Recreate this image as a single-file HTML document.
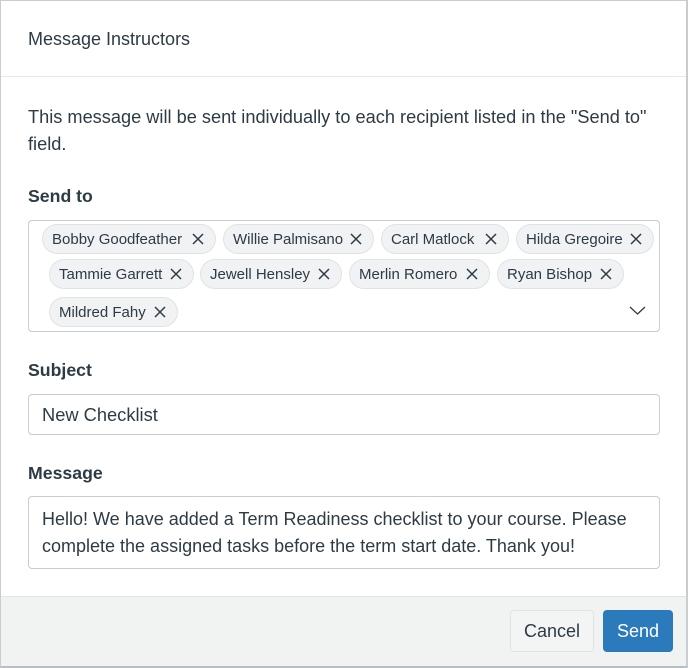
<!DOCTYPE html>
<html><head><style>
*{box-sizing:border-box;margin:0;padding:0}
body{width:688px;height:668px;background:#fff;font-family:"Liberation Sans",Arial,sans-serif;color:#2d3b45;position:relative;overflow:hidden}
.frame{position:absolute;left:0;top:0;width:688px;height:668px;border:1px solid #c7cdd1;border-bottom:2px solid #b8bec2;border-right:2px solid #c7cdd1}
.a{position:absolute}
.chip{position:absolute;height:30px;border:1px solid #dfe3e6;background:#f0f2f3;border-radius:15px;font-size:15px;line-height:29px;padding-left:9px;white-space:nowrap}
.chip svg{position:absolute;right:11px;top:8px}
.lbl{font-weight:bold;font-size:17.7px}
.box{border:1px solid #c7cdd1;border-radius:4px;background:#fff}
</style></head><body>
<div class="a" style="left:1px;top:76px;width:686px;height:1px;background:#e6e9ea"></div>
<div class="a" style="left:28px;top:29px;font-size:18px">Message Instructors</div>
<div class="a" style="left:28px;top:104px;width:660px;font-size:18.2px;line-height:27px">This message will be sent individually to each recipient listed in the "Send to"<br>field.</div>
<div class="a lbl" style="left:28px;top:186px">Send to</div>
<div class="a box" style="left:28px;top:220px;width:632px;height:112px"></div>
<div class="chip" style="left:42px;top:224px;width:174px">Bobby Goodfeather<svg width="12" height="12"><path d="M1 1L11 11M11 1L1 11" stroke="#2d3b45" stroke-width="1.5"/></svg></div>
<div class="chip" style="left:223px;top:224px;width:151px">Willie Palmisano<svg width="12" height="12"><path d="M1 1L11 11M11 1L1 11" stroke="#2d3b45" stroke-width="1.5"/></svg></div>
<div class="chip" style="left:381px;top:224px;width:128px">Carl Matlock<svg width="12" height="12"><path d="M1 1L11 11M11 1L1 11" stroke="#2d3b45" stroke-width="1.5"/></svg></div>
<div class="chip" style="left:516px;top:224px;width:138px">Hilda Gregoire<svg width="12" height="12"><path d="M1 1L11 11M11 1L1 11" stroke="#2d3b45" stroke-width="1.5"/></svg></div>
<div class="chip" style="left:49px;top:259px;width:145px">Tammie Garrett<svg width="12" height="12"><path d="M1 1L11 11M11 1L1 11" stroke="#2d3b45" stroke-width="1.5"/></svg></div>
<div class="chip" style="left:200px;top:259px;width:142px">Jewell Hensley<svg width="12" height="12"><path d="M1 1L11 11M11 1L1 11" stroke="#2d3b45" stroke-width="1.5"/></svg></div>
<div class="chip" style="left:349px;top:259px;width:141px">Merlin Romero<svg width="12" height="12"><path d="M1 1L11 11M11 1L1 11" stroke="#2d3b45" stroke-width="1.5"/></svg></div>
<div class="chip" style="left:497px;top:259px;width:127px">Ryan Bishop<svg width="12" height="12"><path d="M1 1L11 11M11 1L1 11" stroke="#2d3b45" stroke-width="1.5"/></svg></div>
<div class="chip" style="left:49px;top:297px;width:129px">Mildred Fahy<svg width="12" height="12"><path d="M1 1L11 11M11 1L1 11" stroke="#2d3b45" stroke-width="1.5"/></svg></div>
<svg class="a" style="left:629px;top:305px" width="17" height="11"><path d="M1 2 L8.5 9 L16 2" fill="none" stroke="#2d3b45" stroke-width="1.3"/></svg>
<div class="a lbl" style="left:28px;top:360px">Subject</div>
<div class="a box" style="left:28px;top:394px;width:632px;height:41px;font-size:18.3px;line-height:40px;padding-left:13px">New Checklist</div>
<div class="a lbl" style="left:28px;top:463px">Message</div>
<div class="a box" style="left:28px;top:496px;width:632px;height:73px;font-size:18px;line-height:27px;padding:9px 13px">Hello! We have added a Term Readiness checklist to your course. Please complete the assigned tasks before the term start date. Thank you!</div>
<div class="a" style="left:1px;top:596px;width:686px;height:72px;background:#f1f2f2;border-top:1px solid #e2e5e6"></div>
<div class="a" style="left:510px;top:610px;width:84px;height:42px;border:1px solid #e0e3e5;background:#f3f4f4;border-radius:4px;font-size:18px;line-height:40px;text-align:center">Cancel</div>
<div class="a" style="left:603px;top:610px;width:70px;height:42px;background:#2b7abc;border-radius:4px;color:#fff;font-size:18px;line-height:42px;text-align:center">Send</div>
<div class="frame"></div>
</body></html>
